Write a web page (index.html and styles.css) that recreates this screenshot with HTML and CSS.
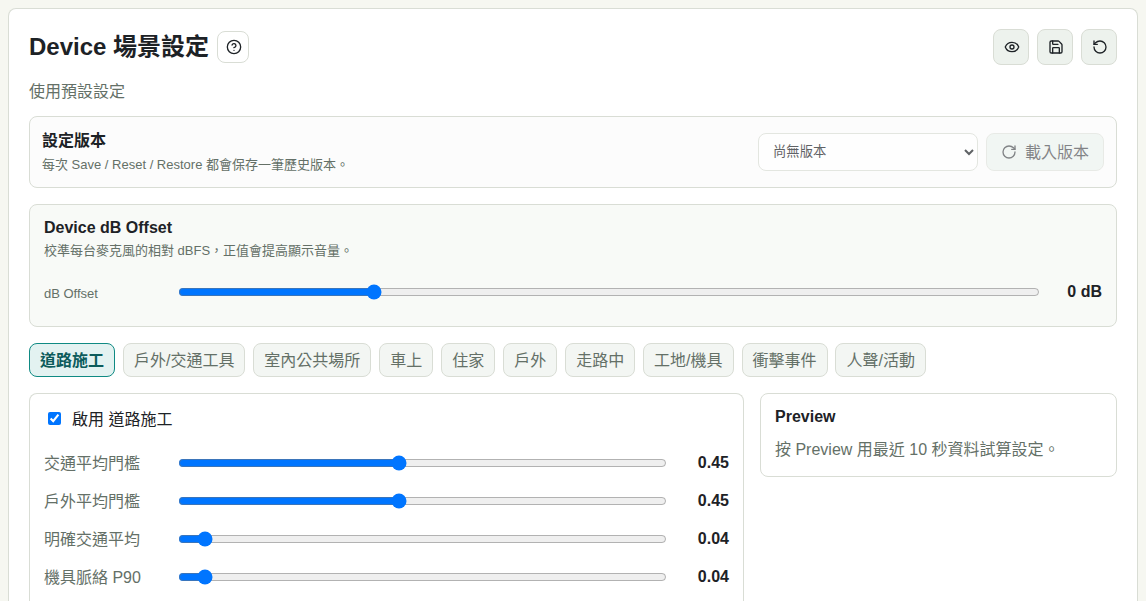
FILE: index.html
```html
<!DOCTYPE html>
<html lang="zh-Hant">
<head>
<meta charset="utf-8">
<title>Device 場景設定</title>
<link rel="stylesheet" href="styles.css">
</head>
<body>
<main class="page-card">
  <header class="page-head">
    <div class="title-group">
      <h1 class="title">Device 場景設定</h1>
      <button class="help-btn" aria-label="說明"><svg class="icon" viewBox="0 0 24 24"><circle cx="12" cy="12" r="10"/><path d="M9.09 9a3 3 0 0 1 5.83 1c0 2-3 3-3 3"/><path d="M12 17h.01"/></svg></button>
    </div>
    <div class="actions">
      <button class="icon-btn" aria-label="Preview"><svg class="icon" viewBox="0 0 24 24"><path d="M2.06 12.35a1 1 0 0 1 0-.7 10.75 10.75 0 0 1 19.88 0 1 1 0 0 1 0 .7 10.75 10.75 0 0 1-19.88 0"/><circle cx="12" cy="12" r="3"/></svg></button>
      <button class="icon-btn" aria-label="Save"><svg class="icon" viewBox="0 0 24 24"><path d="M15.2 3a2 2 0 0 1 1.4.6l3.8 3.8a2 2 0 0 1 .6 1.4V19a2 2 0 0 1-2 2H5a2 2 0 0 1-2-2V5a2 2 0 0 1 2-2z"/><path d="M17 21v-7a1 1 0 0 0-1-1H8a1 1 0 0 0-1 1v7"/><path d="M7 3v4a1 1 0 0 0 1 1h7"/></svg></button>
      <button class="icon-btn" aria-label="Reset"><svg class="icon" viewBox="0 0 24 24"><path d="M3 12a9 9 0 1 0 9-9 9.75 9.75 0 0 0-6.74 2.74L3 8"/><path d="M3 3v5h5"/></svg></button>
    </div>
  </header>
  <p class="status">使用預設設定</p>

  <section class="versions">
    <div class="versions-text">
      <strong class="section-title">設定版本</strong>
      <span class="hint">每次 Save / Reset / Restore 都會保存一筆歷史版本。</span>
    </div>
    <div class="versions-controls">
      <select class="version-select" disabled><option>尚無版本</option></select>
      <button class="load-btn" disabled><svg class="icon" viewBox="0 0 24 24"><path d="M21 12a9 9 0 1 1-9-9c2.52 0 4.93 1 6.74 2.74L21 8"/><path d="M21 3v5h-5"/></svg><span class="load-text">載入版本</span></button>
    </div>
  </section>

  <section class="offset">
    <strong class="section-title">Device dB Offset</strong>
    <span class="hint">校準每台麥克風的相對 dBFS，正值會提高顯示音量。</span>
    <label class="slider-row offset-row"><span class="slider-label small">dB Offset</span><input class="slider" type="range" min="-20" max="70" value="0"><output class="slider-value">0 dB</output></label>
  </section>

  <nav class="tabs">
    <button class="tab active">道路施工</button>
    <button class="tab">戶外/交通工具</button>
    <button class="tab">室內公共場所</button>
    <button class="tab">車上</button>
    <button class="tab">住家</button>
    <button class="tab">戶外</button>
    <button class="tab">走路中</button>
    <button class="tab">工地/機具</button>
    <button class="tab">衝擊事件</button>
    <button class="tab">人聲/活動</button>
  </nav>

  <div class="columns">
    <section class="panel settings">
      <label class="enable"><input class="check" type="checkbox" checked><span class="enable-text">啟用 道路施工</span></label>
      <label class="slider-row"><span class="slider-label">交通平均門檻</span><input class="slider" type="range" min="0" max="1" step="0.01" value="0.45"><output class="slider-value">0.45</output></label>
      <label class="slider-row"><span class="slider-label">戶外平均門檻</span><input class="slider" type="range" min="0" max="1" step="0.01" value="0.45"><output class="slider-value">0.45</output></label>
      <label class="slider-row"><span class="slider-label">明確交通平均</span><input class="slider" type="range" min="0" max="1" step="0.01" value="0.04"><output class="slider-value">0.04</output></label>
      <label class="slider-row"><span class="slider-label">機具脈絡 P90</span><input class="slider" type="range" min="0" max="1" step="0.01" value="0.04"><output class="slider-value">0.04</output></label>
    </section>
    <aside class="panel preview">
      <strong class="section-title">Preview</strong>
      <p class="preview-text">按 Preview 用最近 10 秒資料試算設定。</p>
    </aside>
  </div>
</main>
</body>
</html>
```
FILE: styles.css
```css
* { box-sizing: border-box; }

body {
  margin: 0;
  height: 601px;
  padding: 8px 8px 0;
  overflow: hidden;
  background: #f6f7f1;
  color: #1d2226;
  font: 16px/20px "Liberation Sans", "Noto Sans CJK TC", sans-serif;
}

button, select { font: inherit; color: inherit; }

.page-card {
  display: flex;
  flex-direction: column;
  height: 593px;
  padding: 20px 20px 0;
  background: #fff;
  border: 1px solid #d9ddd5;
  border-bottom: 0;
  border-radius: 8px 8px 0 0;
}

.page-head { display: flex; justify-content: space-between; height: 36px; }
.title-group { display: flex; align-items: center; gap: 8px; }
.title { margin: 0; font-size: 24px; line-height: 32px; font-weight: 700; }
.actions { display: flex; gap: 8px; }

.icon {
  display: block;
  width: 16px;
  height: 16px;
  flex: none;
  fill: none;
  stroke: currentColor;
  stroke-width: 2;
  stroke-linecap: round;
  stroke-linejoin: round;
}

.help-btn, .icon-btn {
  display: grid;
  place-items: center;
  padding: 0 0 1px 1px;
  border: 1px solid #d9ddd5;
  border-radius: 8px;
}
.help-btn { width: 32px; height: 32px; background: #fff; }
.icon-btn { width: 36px; height: 36px; background: #edf2ed; }

.status { margin: 17px 0 14px; color: #647067; }

.versions {
  display: flex;
  justify-content: space-between;
  align-items: center;
  height: 72px;
  padding: 0 12px;
  background: #fcfcfc;
  border: 1px solid #d9ddd5;
  border-radius: 8px;
}
.versions-text { display: grid; gap: 4px; padding-top: 2px; }
.versions-controls { display: flex; gap: 8px; }
.section-title { display: block; font-weight: 700; }
.hint { display: block; font-size: 13px; color: #647067; }

.version-select {
  width: 220px;
  height: 38px;
  padding: 0 10px 1px;
  background: #fff;
  border: 1px solid #d9ddd5;
  border-radius: 8px;
  font-size: 13.333px;
  opacity: 0.7;
}
.load-btn {
  display: flex;
  align-items: center;
  justify-content: center;
  gap: 8px;
  width: 118px;
  height: 38px;
  padding: 0;
  background: #e9f2ed;
  border: 1px solid #d9ddd5;
  border-radius: 8px;
  opacity: 0.55;
}
.load-text { padding-top: 2px; }

.offset {
  height: 123px;
  margin-top: 16px;
  padding: 13px 14px;
  background: #f8faf7;
  border: 1px solid #d9ddd5;
  border-radius: 8px;
}
.offset .hint { margin-top: 3px; }

.slider-row {
  display: grid;
  grid-template-columns: 134px 1fr 62px;
  align-items: center;
  height: 38px;
}
.offset-row { margin-top: 12px; }
.slider-label { padding-top: 2px; color: #647067; }
.slider-label.small { font-size: 13px; padding-top: 4px; }
.slider { width: 100%; height: 16px; margin: 0; }
.slider-value { font-weight: 700; text-align: right; }

.tabs { display: flex; gap: 7.94px; margin-top: 16px; }
.tab {
  height: 34px;
  padding: 2px 10px 0;
  white-space: nowrap;
  background: #f3f6f3;
  color: #647067;
  border: 1px solid #d9ddd5;
  border-radius: 8px;
}
.tab.active {
  background: #e3f2f1;
  color: #0d5c5c;
  border-color: #0f8a83;
  font-weight: 700;
}

.columns {
  display: grid;
  grid-template-columns: 715px 357px;
  gap: 16px;
  flex: 1;
  min-height: 0;
  align-items: start;
  margin-top: 16px;
}
.panel { padding: 13px 14px; border: 1px solid #d9ddd5; border-radius: 8px; }
.settings {
  height: 100%;
  padding: 11px 14px 0;
  border-bottom: 0;
  border-radius: 8px 8px 0 0;
}
.enable { display: flex; align-items: center; gap: 11px; height: 27px; margin-bottom: 12px; }
.enable-text { padding-top: 2px; }
.check { width: 13px; height: 13px; margin: 0 0 0 4px; }
.preview { height: 84px; }
.preview-text { margin: 13px 0 0; color: #647067; }
```
